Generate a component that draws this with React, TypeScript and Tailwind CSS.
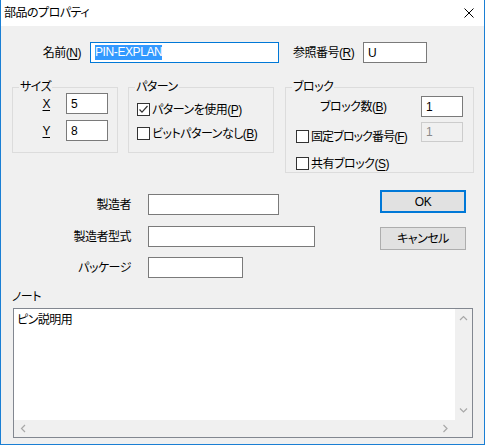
import React from "react";

const font =
  "[font-family:'Liberation_Sans','Noto_Sans_CJK_JP',sans-serif] [font-feature-settings:'palt'] tracking-[-0.5px]";

function U({ children }: { children: React.ReactNode }) {
  return <span className="underline underline-offset-2">{children}</span>;
}

function TextBox({
  className = "",
  children,
}: {
  className?: string;
  children?: React.ReactNode;
}) {
  return (
    <div
      className={`h-[21px] border border-[#7a7a7a] bg-white flex items-center pl-[4px] leading-[14px] ${className}`}
    >
      {children}
    </div>
  );
}

function CheckBox({
  checked,
  label,
  labelClass = "",
}: {
  checked?: boolean;
  label: React.ReactNode;
  labelClass?: string;
}) {
  return (
    <div className="flex items-center gap-[2px] h-[13px] leading-[14px]">
      <div className="w-[13px] h-[13px] border border-[#333333] bg-white shrink-0">
        {checked && (
          <svg width="11" height="11" viewBox="0 0 11 11">
            <polyline
              points="1.5,5.5 4,8.2 9.5,2"
              fill="none"
              stroke="#333333"
              strokeWidth="1.2"
            />
          </svg>
        )}
      </div>
      <span className={`whitespace-nowrap ${labelClass}`}>{label}</span>
    </div>
  );
}

function Group({
  title,
  className = "",
  children,
}: {
  title: string;
  className?: string;
  children: React.ReactNode;
}) {
  return (
    <div className={`relative border border-[#dcdcdc] ${className}`}>
      <span className="absolute -top-[8px] left-[6px] px-[1px] bg-[#f0f0f0] leading-[14px]">
        {title}
      </span>
      {children}
    </div>
  );
}

function Chevron({ dir }: { dir: "up" | "down" | "left" | "right" }) {
  const pts = {
    up: "1,5 4.5,1.5 8,5",
    down: "1,1.5 4.5,5 8,1.5",
    left: "5,1 1.5,4.5 5,8",
    right: "1.5,1 5,4.5 1.5,8",
  }[dir];
  const vertical = dir === "up" || dir === "down";
  return (
    <svg width={vertical ? 9 : 7} height={vertical ? 7 : 9} viewBox={vertical ? "0 0 9 7" : "0 0 7 9"}>
      <polyline points={pts} fill="none" stroke="#a8a8a8" strokeWidth="1.2" />
    </svg>
  );
}

export default function App() {
  return (
    <div
      className={`w-[485px] h-[445px] bg-[#f0f0f0] border-x border-b border-[#1a7fd4] flex flex-col text-[12px] text-black ${font}`}
    >
      {/* title bar */}
      <div className="h-[26px] bg-white flex items-center justify-between pl-[3px] pr-[10px] shrink-0">
        <span className="leading-[14px]">部品のプロパティ</span>
        <svg width="10" height="10" viewBox="0 0 10 10">
          <path d="M0.5 0.5 L9.5 9.5 M9.5 0.5 L0.5 9.5" stroke="#000" strokeWidth="1" />
        </svg>
      </div>

      {/* name row */}
      <div className="mt-[16px] flex items-center h-[21px]">
        <span className="w-[80px] text-right leading-[14px]">
          名前(<U>N</U>)
        </span>
        <TextBox className="ml-[9px] w-[189px] border-[#0078d7]">
          <span className="bg-[#3399ff] text-white leading-[15px] tracking-[-0.4px]">PIN-EXPLAN</span>
        </TextBox>
        <span className="ml-[14px] w-[70px] leading-[14px]">
          参照番号(<U>R</U>)
        </span>
        <TextBox className="w-[64px]">U</TextBox>
      </div>

      {/* groups */}
      <div className="mt-[24px] flex items-start pl-[11px]">
        <Group title="サイズ" className="w-[106px] h-[66px] pt-[5px]">
          <div className="flex items-center">
            <span className="w-[37px] text-right leading-[14px]">
              <U>X</U>
            </span>
            <TextBox className="ml-[16px] w-[42px]">5</TextBox>
          </div>
          <div className="flex items-center mt-[6px]">
            <span className="w-[37px] text-right leading-[14px]">
              <U>Y</U>
            </span>
            <TextBox className="ml-[16px] w-[42px]">8</TextBox>
          </div>
        </Group>

        <Group title="パターン" className="ml-[10px] w-[146px] h-[66px] pt-[15px] pl-[8px]">
          <CheckBox
            checked
            label={
              <>
                パターンを使用(<U>P</U>)
              </>
            }
          />
          <div className="mt-[11px]">
            <CheckBox
              label={
                <>
                  ビットパターンなし(<U>B</U>)
                </>
              }
            />
          </div>
        </Group>

        <Group title="ブロック" className="ml-[11px] w-[189px] h-[86px] pt-[8px]">
          <div className="flex items-center">
            <span className="pl-[34px] w-[135px] leading-[14px]">
              ブロック数(<U>B</U>)
            </span>
            <TextBox className="w-[42px]">1</TextBox>
          </div>
          <div className="flex items-start mt-[5px]">
            <div className="pl-[10px] w-[135px] pt-[8px]">
              <CheckBox
                labelClass="tracking-[-0.9px]"
                label={
                  <>
                    固定ブロック番号(<U>F</U>)
                  </>
                }
              />
            </div>
            <div className="w-[42px] h-[20px] border border-[#cccccc] bg-[#f0f0f0] text-[#8a8a8a] flex items-center pl-[4px] leading-[14px]">
              1
            </div>
          </div>
          <div className="pl-[10px] mt-[14px]">
            <CheckBox
              label={
                <>
                  共有ブロック(<U>S</U>)
                </>
              }
            />
          </div>
        </Group>
      </div>

      {/* manufacturer fields + buttons */}
      <div className="mt-[17px] flex items-start">
        <div className="w-[379px] pt-[4px] flex flex-col">
          <div className="flex items-center">
            <span className="w-[130px] text-right leading-[14px]">製造者</span>
            <TextBox className="ml-[17px] w-[131px]" />
          </div>
          <div className="flex items-center mt-[11px]">
            <span className="w-[130px] text-right leading-[14px]">製造者型式</span>
            <TextBox className="ml-[17px] w-[167px]" />
          </div>
          <div className="flex items-center mt-[10px]">
            <span className="w-[130px] text-right leading-[14px]">パッケージ</span>
            <TextBox className="ml-[17px] w-[95px]" />
          </div>
        </div>
        <div className="flex flex-col">
          <button className="w-[86px] h-[23px] border-2 border-[#0078d7] bg-[#e1e1e1] leading-[14px]">
            OK
          </button>
          <button className="mt-[14px] w-[86px] h-[23px] border border-[#adadad] bg-[#e1e1e1] leading-[14px]">
            キャンセル
          </button>
        </div>
      </div>

      {/* note */}
      <span className="mt-[12px] pl-[11px] leading-[14px] h-[14px]">ノート</span>
      <div className="mt-[4px] ml-[12px] w-[460px] h-[130px] border border-[#828790] bg-white flex flex-col">
        <div className="flex flex-1">
          <div className="flex-1 pl-[3px] pt-[4px] leading-[14px]">ピン説明用</div>
          <div className="w-[17px] bg-[#f0f0f0] flex flex-col items-center justify-between py-[6px]">
            <Chevron dir="up" />
            <Chevron dir="down" />
          </div>
        </div>
        <div className="h-[17px] flex">
          <div className="flex-1 bg-[#f0f0f0] flex items-center justify-between px-[6px]">
            <Chevron dir="left" />
            <Chevron dir="right" />
          </div>
          <div className="w-[17px] bg-[#f0f0f0]" />
        </div>
      </div>
    </div>
  );
}
